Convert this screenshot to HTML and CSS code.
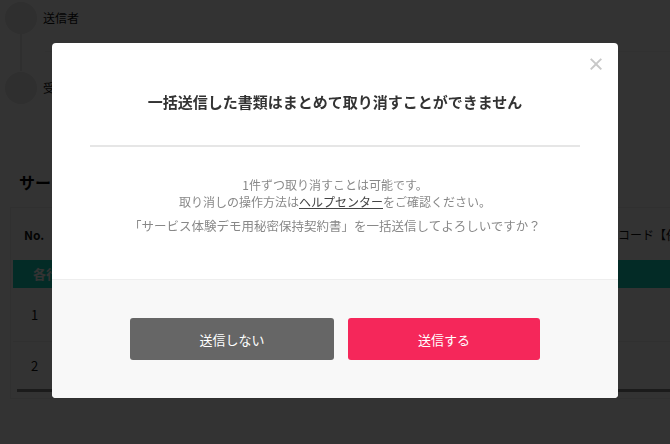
FILE: index.html
```html
<!DOCTYPE html>
<html>
<head>
<meta charset="utf-8">
<link rel="stylesheet" href="styles.css">
</head>
<body>
<div class="page">
	<div class="party">
		<span class="avatar"></span>
		<span class="party-name">送信者</span>
	</div>
	<div class="link-row">
		<span class="link-line"></span>
		<span class="link-rule"></span>
	</div>
	<div class="party">
		<span class="avatar"></span>
		<span class="party-name">受信者</span>
	</div>

	<h2 class="doc-title">サービス体験デモ用秘密保持契約書</h2>

	<div class="table-box">
		<div class="t-head">
			<span class="t-no">No.</span>
			<span class="t-code">コード【任意】</span>
		</div>
		<div class="t-band">各行</div>
		<div class="t-row t-row1">1</div>
		<div class="t-row t-row2">2</div>
	</div>
</div>

<div class="overlay">
	<div class="modal">
		<div class="modal-body">
			<span class="close">&times;</span>
			<h3 class="modal-title">一括送信した書類はまとめて取り消すことができません</h3>
			<hr class="divider">
			<p class="msg">1件ずつ取り消すことは可能です。<br>取り消しの操作方法は<a class="help" href="#">ヘルプセンター</a>をご確認ください。</p>
			<p class="msg msg-confirm">「サービス体験デモ用秘密保持契約書」を一括送信してよろしいですか？</p>
		</div>
		<div class="modal-foot">
			<button class="btn btn-cancel">送信しない</button>
			<button class="btn btn-send">送信する</button>
		</div>
	</div>
</div>
</body>
</html>
```
FILE: styles.css
```css
body {
	margin: 0;
	background: #fff;
	font-family: "Noto Sans CJK JP", "Noto Sans", sans-serif;
	color: #222;
	overflow: hidden;
}

.page {
	padding: 1px 0 0 5px;
	overflow: hidden;
}

.party {
	display: flex;
	align-items: center;
	height: 33px;
}

.avatar {
	width: 32px;
	height: 32px;
	border-radius: 50%;
	background: #e8e8e8;
}

.party-name {
	margin-left: 6px;
	font-size: 12px;
	color: #111;
}

.link-row {
	display: flex;
	align-items: center;
	height: 37px;
}

.link-line {
	width: 2px;
	height: 100%;
	margin-left: 15px;
	background: #e8e8e8;
}

.link-rule {
	flex: 1;
	height: 1px;
	margin-left: 23px;
	margin-top: -2px;
	background: #f2f2f2;
}

.doc-title {
	margin: 66px 0 0 14px;
	font-size: 16px;
	line-height: 24px;
	font-weight: bold;
	color: #000;
	white-space: nowrap;
}

.table-box {
	margin: 13px 0 0 5px;
	border: 1px solid #eee;
	border-right: none;
	padding: 0 0 6px 2px;
}

.t-head {
	display: flex;
	justify-content: space-between;
	align-items: center;
	height: 52px;
	font-size: 12px;
	font-weight: bold;
	color: #111;
}

.t-no {
	margin-left: 11px;
}

.t-code {
	margin-right: -32px;
	font-weight: normal;
	white-space: nowrap;
}

.t-band {
	height: 28px;
	line-height: 28px;
	padding-left: 20px;
	background: #12d4bd;
	color: #fff;
	font-size: 13px;
	font-weight: bold;
}

.t-row {
	display: flex;
	align-items: center;
	padding-left: 18px;
	font-size: 13px;
	color: #111;
}

.t-row1 {
	height: 53px;
	border-bottom: 1px solid #f0f0f0;
}

.t-row2 {
	height: 47px;
	margin-left: 4px;
	padding-left: 14px;
	border-bottom: 3px solid #888;
}

.overlay {
	position: fixed;
	inset: 0;
	background: rgba(0, 0, 0, 0.8);
	display: flex;
	align-items: center;
	justify-content: center;
	padding-bottom: 3px;
}

.modal {
	width: 566px;
	background: #fff;
	border-radius: 4px;
	overflow: hidden;
}

.modal-body {
	position: relative;
	padding: 47px 38px 45px;
	text-align: center;
}

.close {
	position: absolute;
	top: 8px;
	right: 13px;
	font-size: 18px;
	line-height: 24px;
	font-weight: bold;
	color: #c8c8c8;
}

.modal-title {
	margin: 0;
	font-size: 15px;
	line-height: 24px;
	font-weight: bold;
	color: #333;
}

.divider {
	margin: 31px 0 29px;
	border: none;
	height: 2px;
	background: #e6e6e6;
}

.msg {
	margin: 0;
	font-size: 12px;
	line-height: 17px;
	color: #888;
}

.msg-confirm {
	margin-top: 7px;
	font-size: 12.5px;
}

.help {
	color: #444;
	text-decoration: underline;
}

.modal-foot {
	display: flex;
	justify-content: center;
	gap: 14px;
	padding: 38px 0 38px;
	background: #f8f8f8;
	border-top: 1px solid #eee;
}

.btn {
	height: 42px;
	border: none;
	border-radius: 3px;
	color: #fff;
	font-family: inherit;
	font-size: 13px;
	font-weight: normal;
}

.btn-cancel {
	width: 204px;
	background: #666;
}

.btn-send {
	width: 192px;
	background: #f5275a;
}
```
